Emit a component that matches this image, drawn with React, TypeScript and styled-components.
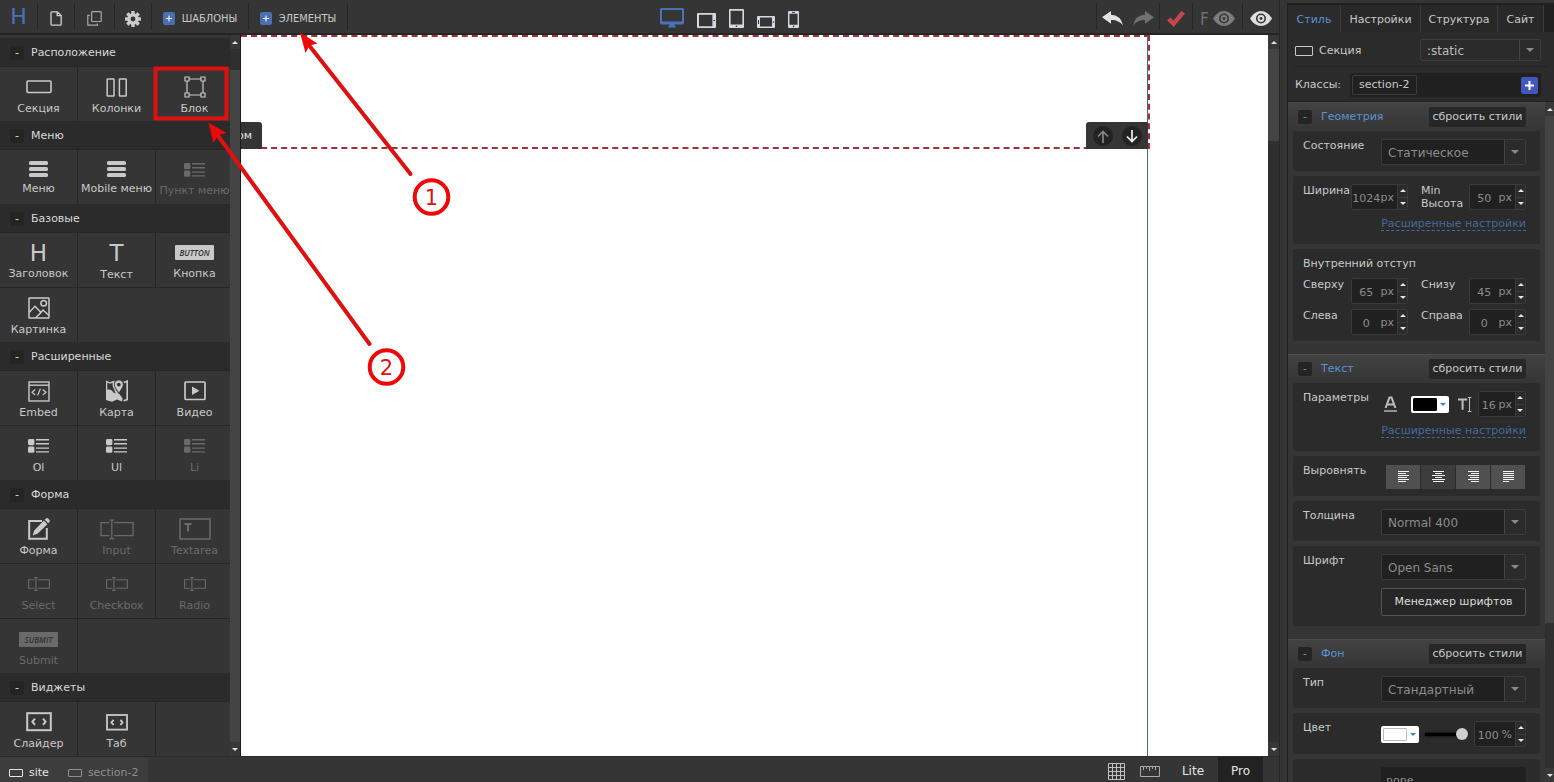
import React from "react";
import styled, { createGlobalStyle, css } from "styled-components";

const c = {
  bar: "#353535",
  dark: "#2b2b2b",
  deeper: "#222222",
  line: "#262626",
  text: "#c9c9c9",
  muted: "#6a6a6a",
  blue: "#5b93d6",
  link: "#446a9c",
  red: "#e01010",
};

const sans = `"DejaVu Sans", Verdana, sans-serif`;
const narrow = `"DejaVu Sans Condensed", "DejaVu Sans", sans-serif`;

const Global = createGlobalStyle`
  *, *::before, *::after { box-sizing: border-box; }
  body { margin: 0; background: ${c.bar}; overflow: hidden; }
  body, button, input, select, textarea { font-family: ${sans}; font-size: 11px; line-height: 14px; color: ${c.text}; }
  button { margin: 0; padding: 0; border: 0; background: none; cursor: pointer; }
  svg { display: block; flex: none; }
  h2 { margin: 0; font: inherit; }
`;

/* ---------- shell ---------- */

const Shell = styled.div`
  position: relative;
  display: flex;
  height: 100vh;
  background: ${c.bar};
`;

const Workspace = styled.main`
  flex: 1;
  min-width: 0;
  display: flex;
  flex-direction: column;
  border-right: 1px solid ${c.line};
`;

const Middle = styled.div`
  flex: 1;
  min-height: 0;
  display: flex;
`;

/* ---------- toolbar ---------- */

const Toolbar = styled.header`
  flex: none;
  height: 35px;
  display: flex;
  align-items: center;
  border-bottom: 2px solid #242424;
`;

const ToolGroup = styled.div`
  display: flex;
  align-items: center;
`;

const ToolButton = styled.button<{ $width: number; $divider?: boolean }>`
  width: ${(p) => p.$width}px;
  height: 27px;
  display: flex;
  align-items: center;
  justify-content: center;
  gap: 7px;
  padding-top: 4px;
  font-family: ${narrow};
  border-right: ${(p) => (p.$divider ? `1px solid ${c.line}` : "0")};
`;

const LogoButton = styled(ToolButton)`
  font-family: ${sans};
  font-size: 22px;
  line-height: 22px;
  padding-top: 0;
  color: #4a72b8;
`;

const Devices = styled.div`
  margin: 0 auto;
  padding: 2px 0 0 14px;
  display: flex;
  align-items: flex-end;
  gap: 13px;
`;

const DeviceButton = styled.button`
  display: flex;
`;

const RightTools = styled(ToolGroup)`
  border-left: 1px solid ${c.line};
  > button { gap: 4px; }
`;

const FixMark = styled.span`
  font-size: 17px;
  color: #6f6f6f;
`;

/* ---------- scroll bars ---------- */

const Bar = styled.div<{ $width: number }>`
  flex: none;
  width: ${(p) => p.$width}px;
  display: flex;
  flex-direction: column;
  background: #2f2f2f;
`;

const BarButton = styled.button`
  height: 14px;
  display: flex;
  align-items: center;
  justify-content: center;
  background: #383838;
`;

const BarGap = styled.div<{ $grow: number }>`
  flex: ${(p) => p.$grow} 0 0;
`;

const BarThumb = styled.div<{ $grow: number }>`
  flex: ${(p) => p.$grow} 0 0;
  background: #444444;
`;

const Tri: React.FC<{ up?: boolean; fill?: string; w?: number }> = ({ up, fill = "#e4e4e4", w = 6 }) => (
  <svg width={w} height={w / 2} viewBox="0 0 6 3">
    <path d={up ? "M0 3 3 0 6 3Z" : "M0 0H6L3 3Z"} fill={fill} />
  </svg>
);

const ScrollBar: React.FC<{ width: number; before: number; thumb: number; after: number }> = (p) => (
  <Bar $width={p.width}>
    <BarButton type="button" aria-label="Прокрутить вверх"><Tri up /></BarButton>
    <BarGap $grow={p.before} />
    <BarThumb $grow={p.thumb} />
    <BarGap $grow={p.after} />
    <BarButton type="button" aria-label="Прокрутить вниз"><Tri /></BarButton>
  </Bar>
);

/* ---------- element palette ---------- */

const Palette = styled.aside`
  flex: none;
  display: flex;
  border-right: 1px solid #1b1b1b;
`;

const PaletteList = styled.div`
  width: 230px;
  padding-top: 3px;
  overflow: hidden;
`;

const PaletteHead = styled.h2`
  height: 28px;
  display: flex;
  align-items: center;
  gap: 7px;
  padding: 1px 0 0 10px;
  background: ${c.dark};
  color: #dadada;
`;

const Fold = styled.button<{ $blue?: boolean }>`
  width: 14px;
  height: 14px;
  background: #242424;
  border-radius: 2px;
  color: ${(p) => (p.$blue ? c.blue : "#dadada")};
`;

const Tiles = styled.div`
  display: grid;
  grid-template-columns: repeat(3, 78px);
  grid-auto-rows: 55px;
`;

const Tile = styled.button<{ $muted?: boolean; $lift?: number }>`
  display: flex;
  flex-direction: column;
  align-items: center;
  padding-top: 6px;
  border-top: 1px solid ${c.line};
  border-right: 1px solid ${c.line};
  color: ${(p) => (p.$muted ? c.muted : c.text)};
  white-space: nowrap;
  > span:first-child {
    height: ${(p) => 28 - (p.$lift ?? 0)}px;
    margin-bottom: 1px;
    display: flex;
    align-items: center;
  }
`;

const Filler = styled.div`
  grid-column-end: -1;
  border-top: 1px solid ${c.line};
`;

const Letter = styled.b`
  font-size: 23px;
  font-weight: 400;
  line-height: 24px;
`;

const Stamp = styled.i`
  width: 39px;
  height: 15px;
  border-radius: 1px;
  background: currentColor;
  text-align: center;
  > b {
    display: block;
    font-family: "Open Sans", sans-serif;
    font-size: 8px;
    font-weight: 600;
    line-height: 15px;
    color: #333333;
  }
`;

const S = { fill: "none", stroke: "currentColor" } as const;

const icons: Record<string, React.ReactNode> = {
  section: <svg width="26" height="14" viewBox="0 0 26 14"><rect x="1" y="1" width="24" height="11.5" rx="1" {...S} strokeWidth="1.6" /></svg>,
  columns: <svg width="22" height="19" viewBox="0 0 22 19"><rect x="1.2" y="1" width="6.8" height="17" rx=".5" {...S} strokeWidth="1.5" /><rect x="13.4" y="1" width="6.8" height="17" rx=".5" {...S} strokeWidth="1.5" /></svg>,
  block: (
    <svg width="22" height="22" viewBox="0 0 22 22" {...S} strokeWidth="1.2">
      <path d="M5 3H17M5 19H17M3 5V17M19 5V17" />
      <path d="M1 1H5V5H1ZM17 1H21V5H17ZM1 17H5V21H1ZM17 17H21V21H17Z" />
    </svg>
  ),
  menu: <svg width="19" height="16" viewBox="0 0 19 16" fill="currentColor"><rect width="19" height="4" rx="1.6" /><rect y="6" width="19" height="4" rx="1.6" /><rect y="12" width="19" height="4" rx="1.6" /></svg>,
  list: (
    <svg width="22" height="16" viewBox="0 0 22 16" fill="currentColor">
      <rect x="0" y="1" width="6.4" height="6.2" rx="1.4" /><rect x="0" y="8.6" width="6.4" height="6.2" rx="1.4" />
      <path d="M8 1H21V2.4H8ZM8 5H21V6.4H8ZM8 9.4H21V10.8H8ZM8 13.2H21V14.6H8Z" />
    </svg>
  ),
  picture: (
    <svg width="22" height="22" viewBox="0 0 22 22" {...S} strokeWidth="1.5">
      <rect x="1" y="1" width="20" height="20" rx=".5" /><circle cx="15.7" cy="6.3" r="2.8" />
      <path d="M1 15.5 7 9.3 13 15.6 7.5 21M10.8 17.8 15 13 21 18.5" />
    </svg>
  ),
  embed: (
    <svg width="22" height="21" viewBox="0 0 22 21" {...S} strokeWidth="1.4">
      <rect x="1" y="1" width="20" height="19" /><path d="M1 4.2H21" />
      <path d="M7.2 8.5 4 11.3 7.2 14M14.8 8.5 18 11.3 14.8 14M12.4 7.8 9.6 14.6" strokeWidth="1.2" />
    </svg>
  ),
  map: (
    <svg width="22" height="22" viewBox="0 0 22 22">
      <path d="M0 .5 4 2.3 8.4.6V6Q9 9 11.6 12.6L13.4 14 16.6 18.6 16 21.6 11 19.4 6 21.8 0 20V11Z" fill="currentColor" />
      <path d="M1.3 2.4V9.6Q5.6 8.6 7.4 12.6L9.6 13.6 8.2 9.4 6.6 6V2.8L4 3.8Z" fill="#353535" />
      <path d="M17.8 2.6 21.2 1.2V19.6L17.6 20.8" {...S} strokeWidth="1.6" />
      <path d="M12.8 0A4.5 4.5 0 0 1 17.3 4.6C17.3 7.8 14 10.6 12.9 13.4 11.8 10.6 8.3 7.8 8.3 4.6A4.5 4.5 0 0 1 12.8 0Z" fill="currentColor" stroke="#353535" strokeWidth=".8" />
      <circle cx="12.8" cy="4.6" r="1.9" fill="#353535" />
    </svg>
  ),
  video: <svg width="22" height="20" viewBox="0 0 22 20"><rect x="1" y="1" width="20" height="17.5" rx="1" {...S} strokeWidth="1.7" /><path d="M8 5.6 15.4 9.8 8 14Z" fill="currentColor" /></svg>,
  form: (
    <svg width="22" height="22" viewBox="0 0 22 22">
      <path d="M14 3H1.2V20.8H18.8V10" {...S} strokeWidth="2" />
      <path d="M15.8 2.6 19.4 6.2 9.5 15.8 4.6 17.4 6.2 12.4ZM16.7 1.7 18 .5Q19.2-.4 20.4.8L21.3 1.8Q22.3 3 21.4 4.1L20.3 5.3Z" fill="currentColor" />
    </svg>
  ),
  input: (
    <svg width="34" height="21" viewBox="0 0 34 21" {...S} strokeWidth="1.3">
      <path d="M9.5 3.6H1V16.6H9.5M14 3.6H33V16.6H14M11.8 1.5V19M9.4.8Q11.8.8 11.8 2.2 11.8.8 14.2.8M9.4 19.8Q11.8 19.8 11.8 18.4 11.8 19.8 14.2 19.8" />
    </svg>
  ),
  textarea: <svg width="32" height="22" viewBox="0 0 32 22"><rect x="1" y="1" width="30" height="20" {...S} strokeWidth="1.5" /><path d="M5.500 6H12.500M9 6V13.500" {...S} strokeWidth="2.200" /></svg>,
  field: (
    <svg width="22" height="14" viewBox="0 0 22 14" {...S} strokeWidth="1.1">
      <path d="M6.2 2.8H.6V11.2H6.2M9.6 2.8H21.4V11.2H9.6M7.9 1V13M6.2.6H9.6M6.2 13.4H9.6" />
    </svg>
  ),
  slider: <svg width="26" height="20" viewBox="0 0 26 20" {...S}><rect x="1.2" y="1.2" width="23.6" height="17" strokeWidth="2" /><path d="M9 6.6 6.4 9.7 9 12.8M17 6.6 19.6 9.7 17 12.8" strokeWidth="2" /></svg>,
  tab: <svg width="22" height="18" viewBox="0 0 22 18" {...S}><rect x="1" y="2" width="20" height="14.6" strokeWidth="1.8" /><path d="M7.6 6.8 5.4 9.4 7.6 12M14.4 6.8 16.6 9.4 14.4 12" strokeWidth="1.8" /></svg>,
  heading: <Letter>H</Letter>,
  text: <Letter>T</Letter>,
  button: <Stamp><b>BUTTON</b></Stamp>,
  submit: <Stamp><b>SUBMIT</b></Stamp>,
};

type Item = [icon: string, label: string, muted?: boolean, lift?: number];

const palette: { title: string; items: Item[] }[] = [
  { title: "Расположение", items: [["section", "Секция"], ["columns", "Колонки"], ["block", "Блок"]] },
  { title: "Меню", items: [["menu", "Меню", false, 3], ["menu", "Mobile меню", false, 3], ["list", "Пункт меню", true, 1]] },
  { title: "Базовые", items: [["heading", "Заголовок", false, 1], ["text", "Текст"], ["button", "Кнопка", false, 1], ["picture", "Картинка"]] },
  {
    title: "Расширенные",
    items: [["embed", "Embed"], ["map", "Карта"], ["video", "Видео"], ["list", "Ol"], ["list", "Ul"], ["list", "Li", true]],
  },
  {
    title: "Форма",
    items: [
      ["form", "Форма"], ["input", "Input", true], ["textarea", "Textarea", true],
      ["field", "Select", true], ["field", "Checkbox", true], ["field", "Radio", true],
      ["submit", "Submit", true],
    ],
  },
  { title: "Виджеты", items: [["slider", "Слайдер"], ["tab", "Таб"]] },
];

/* ---------- canvas ---------- */

const Canvas = styled.div`
  flex: 1;
  min-width: 0;
  display: flex;
  background: #ffffff;
`;

const Page = styled.div`
  flex: 1;
  margin-right: 120px;
  border-right: 1px solid #4f6a80;
`;

const Section = styled.section`
  position: relative;
  height: 114px;
  margin-right: -3px;
  border: 2px dashed #a0303a;
  border-left: 0;
`;

const Tag = styled.div<{ $side: "left" | "right" }>`
  position: absolute;
  bottom: -2px;
  height: 27px;
  display: flex;
  align-items: center;
  overflow: hidden;
  background: ${c.bar};
  color: #e6e6e6;
  ${(p) =>
    p.$side === "left"
      ? css`left: 0; width: 21px; justify-content: flex-end; padding-right: 10px; border-radius: 0 3px 0 0;`
      : css`right: 0; width: 62px; justify-content: center; gap: 9px; padding-top: 1px; border-radius: 3px 0 0 0;`}
`;

const MoveButton = styled.button<{ $dim?: boolean }>`
  width: 20px;
  height: 20px;
  border-radius: 50%;
  background: #232323;
  display: flex;
  align-items: center;
  justify-content: center;
  color: ${(p) => (p.$dim ? "#858585" : "#f0f0f0")};
`;

const Annotations = styled.svg`
  position: absolute;
  left: 0;
  top: 0;
  pointer-events: none;
`;

/* ---------- status bar ---------- */

const Status = styled.footer`
  flex: none;
  height: 26px;
  display: flex;
  align-items: stretch;
  border-top: 1px solid #2a2a2a;
  > nav { display: flex; margin-right: auto; }
`;

const Crumb = styled.button<{ $on?: boolean }>`
  display: flex;
  align-items: center;
  gap: 6px;
  padding: 6px 10px 0 9px;
  background: #3d3d3d;
  color: ${(p) => (p.$on ? "#e6e6e6" : "#8f8f8f")};
`;

const StatusButton = styled.button<{ $width: number; $on?: boolean }>`
  width: ${(p) => p.$width}px;
  display: flex;
  align-items: center;
  justify-content: center;
  padding-top: 3px;
  font-size: 12px;
  color: #e6e6e6;
  background: ${(p) => (p.$on ? "#222222" : "none")};
`;

/* ---------- inspector ---------- */

const Inspector = styled.aside`
  flex: none;
  width: 267px;
  margin: 3px 0 0 7px;
  display: flex;
  flex-direction: column;
  background: ${c.dark};
  border: 2px solid #202020;
  border-width: 2px 0 0 1px;
`;

const Tabs = styled.nav`
  flex: none;
  height: 27px;
  display: flex;
  background: #202020;
`;

const TabButton = styled.button<{ $width: number; $on?: boolean }>`
  width: ${(p) => p.$width}px;
  padding-top: 3px;
  background: ${(p) => (p.$on ? c.dark : "#282828")};
  border-right: 1px solid #3a3a3a;
  color: ${(p) => (p.$on ? c.blue : c.text)};
`;

const HeadRow = styled.div<{ $rule?: boolean }>`
  flex: none;
  height: ${(p) => (p.$rule ? 35 : 34)}px;
  margin: 0 6px;
  display: flex;
  align-items: center;
  justify-content: space-between;
  padding: 2px 7px 0 1px;
  border-bottom: ${(p) => (p.$rule ? "1px solid #232323" : "0")};
`;

const Kind = styled.label`
  display: flex;
  align-items: center;
  gap: 6px;
  padding-top: 1px;
`;

const ClassBox = styled.div`
  width: 191px;
  height: 24px;
  display: flex;
  align-items: center;
  justify-content: space-between;
  padding: 0 3px 0 2px;
  background: #202020;
  border-radius: 2px;
`;

const Chip = styled.button`
  height: 20px;
  padding: 0 6px;
  border: 1px solid #3c3c3c;
  border-radius: 2px;
`;

const AddButton = styled.button`
  width: 17px;
  height: 17px;
  display: flex;
  align-items: center;
  justify-content: center;
  border-radius: 2px;
  background: #4256bd;
`;

const Scroller = styled.div`
  flex: 1;
  min-height: 0;
  display: flex;
  border-top: 1px solid #1e1e1e;
  background: ${c.bar};
`;

const Groups = styled.div`
  flex: 1;
  display: flex;
  flex-direction: column;
  gap: 13px;
  overflow: hidden;
`;

const GroupBox = styled.section`
  display: flex;
  flex-direction: column;
  gap: 5px;
  padding: 0 5px;
`;

const GroupHead = styled.h2`
  height: 29px;
  margin: 0 -5px -5px;
  display: flex;
  align-items: center;
  gap: 9px;
  padding: 0 19px 0 10px;
  border-top: 1px solid #4c4c4c;
  background: linear-gradient(#424242, ${c.bar});
  color: ${c.blue};
  > span { flex: 1; }
`;

const Reset = styled.button`
  width: 97px;
  height: 20px;
  background: #272727;
  border-radius: 2px;
`;

const Card = styled.div<{ $height: number }>`
  height: ${(p) => p.$height}px;
  flex: none;
  padding: 8px 14px 0 10px;
  background: ${c.dark};
  border-radius: 3px;
`;

const CardRow = styled.div`
  display: flex;
  justify-content: space-between;
  align-items: flex-start;
`;

const Right = styled.div`
  width: 145px;
  display: flex;
  flex-wrap: wrap;
  align-items: center;
  justify-content: space-between;
  row-gap: 8px;
`;

const Pair = styled.div`
  display: grid;
  grid-template-columns: 48px 70px 48px 57px;
  row-gap: 5px;
  align-items: start;
  line-height: 13px;
  label { line-height: 13px; }
`;

const Note = styled.div`
  margin-bottom: 7px;
`;

const SelectBox = styled.div<{ $width: number; $height: number; $plain?: boolean }>`
  width: ${(p) => p.$width}px;
  height: ${(p) => p.$height}px;
  display: flex;
  border: 1px solid #3c3c3c;
  border-radius: 2px;
  background: ${(p) => (p.$plain ? "#2b2b2b" : "#202020")};
  > select {
    flex: 1;
    min-width: 0;
    appearance: none;
    border: 0;
    border-right: 1px solid #444444;
    background: none;
    padding: 2px 0 0 6px;
    font-size: 12px;
    color: ${(p) => (p.$plain ? "#bcbcbc" : "#8c8c8c")};
    line-height: 16px;
  }
  > span {
    width: 20px;
    display: flex;
    align-items: center;
    justify-content: center;
    background: ${c.dark};
  }
`;

const NumberBox = styled.div<{ $width: number }>`
  width: ${(p) => p.$width}px;
  height: 26px;
  display: flex;
  background: #202020;
  border: 1px solid #3a3a3a;
  border-radius: 2px;
  color: #8c8c8c;
  > input {
    flex: 1;
    min-width: 0;
    width: 0;
    padding: 3px 0 0;
    border: 0;
    background: none;
    text-align: center;
    color: inherit;
  }
  > span { padding: 6px 3px 0 0; line-height: 14px; }
`;

const Spin = styled.div`
  width: 10px;
  display: flex;
  flex-direction: column;
  background: ${c.dark};
  border-left: 1px solid #3a3a3a;
  > button {
    flex: 1;
    display: flex;
    align-items: center;
    justify-content: center;
  }
  > button + button { border-top: 1px solid #3a3a3a; }
`;

const More = styled.a`
  display: block;
  width: fit-content;
  margin: 7px 0 0 auto;
  border-bottom: 1px dashed ${c.link};
  line-height: 13px;
  text-decoration: none;
  color: ${c.link};
  white-space: nowrap;
`;

const Swatch = styled.button<{ $color: string; $edge: string }>`
  width: 38px;
  height: 17px;
  display: flex;
  align-items: center;
  justify-content: space-between;
  padding: 0 3px 0 2px;
  background: #ffffff;
  border-radius: 2px;
  &::before {
    content: "";
    width: 24px;
    height: 13px;
    background: ${(p) => p.$color};
    border: 1px solid ${(p) => p.$edge};
    border-radius: 1px;
  }
`;

const AlignGroup = styled.div`
  display: flex;
  gap: 1px;
  margin: 1px 1px 0 0;
  width: 139px;
  > button {
    flex: 1;
    height: 24px;
    display: flex;
    align-items: center;
    justify-content: center;
    background: #505050;
    color: #f4f4f4;
  }
  > button[aria-pressed="true"] { background: #3c3c3c; }
`;

const FontsButton = styled.button`
  width: 145px;
  height: 28px;
  border: 1px solid #545454;
  border-radius: 2px;
  background: #262626;
  color: #dcdcdc;
`;

const Opacity = styled.input`
  appearance: none;
  width: 43px;
  height: 14px;
  margin: 0;
  background: none;
  &::-webkit-slider-runnable-track { height: 3px; background: #000000; box-shadow: 0 0 3px #000000; }
  &::-webkit-slider-thumb {
    appearance: none;
    width: 12px;
    height: 12px;
    margin-top: -5px;
    border-radius: 50%;
    background: #cfcfcf;
  }
`;

const ImageInput = styled.input`
  width: 145px;
  height: 26px;
  padding: 1px 5px 0;
  border: 0;
  border-radius: 2px;
  background: #202020;
  color: #8c8c8c;
`;

const Pick: React.FC<{ id: string; value: string; width?: number; height?: number; plain?: boolean }> = ({
  id, value, width = 145, height = 26, plain,
}) => (
  <SelectBox $width={width} $height={height} $plain={plain}>
    <select id={id} defaultValue={value}><option>{value}</option></select>
    <span><Tri fill="#8a8a8a" w={8} /></span>
  </SelectBox>
);

const Num: React.FC<{ id: string; value: string; unit?: string; width?: number }> = ({ id, value, unit = "px", width = 57 }) => (
  <NumberBox $width={width}>
    <input id={id} defaultValue={value} />
    <span>{unit}</span>
    <Spin>
      <button type="button" aria-label="Больше"><Tri up /></button>
      <button type="button" aria-label="Меньше"><Tri /></button>
    </Spin>
  </NumberBox>
);

const Group: React.FC<{ title: string; children: React.ReactNode }> = ({ title, children }) => (
  <GroupBox>
    <GroupHead>
      <Fold $blue type="button" aria-label={`Свернуть: ${title}`}>-</Fold>
      <span>{title}</span>
      <Reset type="button">сбросить стили</Reset>
    </GroupHead>
    {children}
  </GroupBox>
);

const alignWidths = {
  left: [11, 8, 11, 9, 11, 8],
  center: [11, 7, 13, 7, 13, 11],
  right: [11, 8, 11, 9, 11, 8],
  justify: [11, 11, 11, 11, 11, 6],
};

const AlignIcon: React.FC<{ kind: keyof typeof alignWidths }> = ({ kind }) => (
  <svg width="13" height="12" viewBox="0 0 13 12" fill="currentColor">
    {alignWidths[kind].map((w, i) => (
      <rect key={i} x={kind === "right" ? 12 - w : kind === "center" ? (13 - w) / 2 : 1} y={i * 2} width={w} height="1" />
    ))}
  </svg>
);

const MiniSection: React.FC<{ w: number; h: number }> = ({ w, h }) => (
  <svg width={w} height={h}><rect x=".5" y=".5" width={w - 1} height={h - 1} rx=".5" {...S} /></svg>
);

const Plus: React.FC = () => (
  <svg width="12" height="13" viewBox="0 0 12 13"><rect width="12" height="13" rx="2" fill="#4a6fb3" /><path d="M6 3.5V9.5M3 6.5H9" stroke="#e8eefa" strokeWidth="1.2" /></svg>
);

const Eye: React.FC<{ color: string }> = ({ color }) => (
  <svg width="22" height="15" viewBox="0 0 22 15">
    <path d="M0 7.5Q4.5 0 11 0T22 7.5Q17.5 15 11 15T0 7.5Z" fill={color} />
    <circle cx="11" cy="7.5" r="5" fill={c.bar} /><circle cx="11" cy="7.5" r="3.4" fill={color} /><circle cx="11" cy="7.5" r="1.4" fill={c.bar} />
  </svg>
);

const Undo: React.FC<{ color: string; flip?: boolean }> = ({ color, flip }) => (
  <svg width="21" height="15" viewBox="0 0 21 15">
    <path transform={flip ? "matrix(-1 0 0 1 21 0)" : undefined} d="M0 6.2 9 0V3.8Q18.5 4 21 14.5 16.5 8.6 9 9V12.8Z" fill={color} />
  </svg>
);

const device = "#d3d8e4";

const TopBar: React.FC = () => (
  <Toolbar>
    <ToolGroup>
      <LogoButton type="button" $width={38} $divider>H</LogoButton>
      <ToolButton type="button" $width={37} $divider aria-label="Новая страница">
        <svg width="12" height="15" viewBox="0 0 12 15" fill="none" stroke="#d0d0d0" strokeWidth="1.3"><path d="M1 2Q1 .8 2 .8H7.3L11.2 4.6V13Q11.2 14.2 10.2 14.2H2Q1 14.2 1 13ZM7.2.8V4.7H11.2" /></svg>
      </ToolButton>
      <ToolButton type="button" $width={40} $divider aria-label="Копировать">
        <svg width="15" height="15" viewBox="0 0 15 15" fill="none" stroke="#a8a8a8" strokeWidth="1.2"><rect x="4.6" y=".7" width="9.6" height="9.8" rx=".5" /><path d="M2.8 4.4H.8V14.2H10.4V12.4" /></svg>
      </ToolButton>
      <ToolButton type="button" $width={37} $divider aria-label="Параметры">
        <svg width="16" height="16" viewBox="-8 -8 16 16">
          <g fill="#cccccc">
            {[0, 45, 90, 135].map((a) => <rect key={a} x="-1.7" y="-8" width="3.4" height="16" rx=".5" transform={`rotate(${a})`} />)}
            <circle r="5.7" />
          </g>
          <circle r="2.4" fill={c.bar} />
        </svg>
      </ToolButton>
      <ToolButton type="button" $width={97} $divider><Plus />ШАБЛОНЫ</ToolButton>
      <ToolButton type="button" $width={99} $divider><Plus />ЭЛЕМЕНТЫ</ToolButton>
    </ToolGroup>
    <Devices>
      <DeviceButton type="button" aria-label="Монитор">
        <svg width="24" height="20" viewBox="0 0 24 20"><path d="M1.5 0H22.5Q24 0 24 1.5V15Q24 16.5 22.5 16.5H1.5Q0 16.5 0 15V1.5Q0 0 1.5 0ZM2 2V13.5H22V2ZM9.5 16.5H14.5L16 19.5H8Z" fill="#4a72b8" fillRule="evenodd" /></svg>
      </DeviceButton>
      <DeviceButton type="button" aria-label="Планшет горизонтально">
        <svg width="19" height="15" viewBox="0 0 19 15"><path d="M1 0H18Q19 0 19 1V14Q19 15 18 15H1Q0 15 0 14V1Q0 0 1 0ZM2 1.8V13.2H15.4V1.8Z" fill={device} fillRule="evenodd" /><circle cx="17.2" cy="7.5" r=".8" fill="#333" /></svg>
      </DeviceButton>
      <DeviceButton type="button" aria-label="Планшет">
        <svg width="15" height="19" viewBox="0 0 15 19"><path d="M1 0H14Q15 0 15 1V18Q15 19 14 19H1Q0 19 0 18V1Q0 0 1 0ZM1.6 1.8V15.6H13.4V1.8Z" fill={device} fillRule="evenodd" /><circle cx="7.5" cy="17.2" r=".8" fill="#333" /></svg>
      </DeviceButton>
      <DeviceButton type="button" aria-label="Телефон горизонтально">
        <svg width="18" height="12" viewBox="0 0 18 12"><path d="M1 0H17Q18 0 18 1V11Q18 12 17 12H1Q0 12 0 11V1Q0 0 1 0ZM3 1.4V10.6H15V1.4Z" fill={device} fillRule="evenodd" /><circle cx="16.5" cy="6" r=".8" fill="#333" /><path d="M1.5 4V8" stroke="#333" /></svg>
      </DeviceButton>
      <DeviceButton type="button" aria-label="Телефон">
        <svg width="11" height="17" viewBox="0 0 11 17"><path d="M1 0H10Q11 0 11 1V16Q11 17 10 17H1Q0 17 0 16V1Q0 0 1 0ZM1.4 2.8V13.8H9.6V2.8Z" fill={device} fillRule="evenodd" /><circle cx="5.5" cy="15.4" r=".8" fill="#333" /><path d="M4 1.4H7" stroke="#333" /></svg>
      </DeviceButton>
    </Devices>
    <RightTools>
      <ToolButton type="button" $width={31} aria-label="Отменить"><Undo color="#e2e2e2" /></ToolButton>
      <ToolButton type="button" $width={32} $divider aria-label="Повторить"><Undo color="#707070" flip /></ToolButton>
      <ToolButton type="button" $width={33} $divider aria-label="Сохранить">
        <svg width="18" height="16" viewBox="0 0 18 16"><path d="M0 9.2 3.6 6.6 6.4 9.8 14.4 0 18 2.4 6.8 16Z" fill="#c9454d" /></svg>
      </ToolButton>
      <ToolButton type="button" $width={50} $divider aria-label="Фиксированный просмотр"><FixMark>F</FixMark><Eye color="#7c7c7c" /></ToolButton>
      <ToolButton type="button" $width={36} aria-label="Просмотр"><Eye color="#dedede" /></ToolButton>
    </RightTools>
  </Toolbar>
);

const ElementPalette: React.FC = () => (
  <Palette>
    <PaletteList>
      {palette.map((g) => (
        <section key={g.title}>
          <PaletteHead><Fold type="button" aria-label={`Свернуть: ${g.title}`}>-</Fold>{g.title}</PaletteHead>
          <Tiles>
            {g.items.map(([icon, label, muted, lift]) => (
              <Tile key={label} type="button" $muted={muted} $lift={lift}><span>{icons[icon]}</span><span>{label}</span></Tile>
            ))}
            {g.items.length % 3 > 0 && <Filler style={{ gridColumnStart: (g.items.length % 3) + 1 }} />}
          </Tiles>
        </section>
      ))}
    </PaletteList>
    <ScrollBar width={10} before={21} thumb={673} after={0} />
  </Palette>
);

const StyleInspector: React.FC = () => (
  <Inspector>
    <Tabs>
      <TabButton type="button" $width={53} $on>Стиль</TabButton>
      <TabButton type="button" $width={80}>Настройки</TabButton>
      <TabButton type="button" $width={77}>Структура</TabButton>
      <TabButton type="button" $width={46}>Сайт</TabButton>
    </Tabs>
    <HeadRow $rule>
      <Kind htmlFor="state"><MiniSection w={18} h={10} />Секция</Kind>
      <Pick id="state" value=":static" width={121} height={22} plain />
    </HeadRow>
    <HeadRow>
      <span>Классы:</span>
      <ClassBox>
        <Chip type="button">section-2</Chip>
        <AddButton type="button" aria-label="Добавить класс"><svg width="9" height="9"><path d="M4.5 0V9M0 4.5H9" stroke="#fff" strokeWidth="2" /></svg></AddButton>
      </ClassBox>
    </HeadRow>
    <Scroller>
      <Groups>
        <Group title="Геометрия">
          <Card $height={40}>
            <CardRow><label htmlFor="position">Состояние</label><Pick id="position" value="Статическое" /></CardRow>
          </Card>
          <Card $height={68}>
            <Pair>
              <label htmlFor="w">Ширина</label><Num id="w" value="1024" />
              <label htmlFor="h">Min Высота</label><Num id="h" value="50" />
            </Pair>
            <More href="#geometry">Расширенные настройки</More>
          </Card>
          <Card $height={92}>
            <Note>Внутренний отступ</Note>
            <Pair>
              <label htmlFor="pt">Сверху</label><Num id="pt" value="65" />
              <label htmlFor="pb">Снизу</label><Num id="pb" value="45" />
              <label htmlFor="pl">Слева</label><Num id="pl" value="0" />
              <label htmlFor="pr">Справа</label><Num id="pr" value="0" />
            </Pair>
          </Card>
        </Group>
        <Group title="Текст">
          <Card $height={68}>
            <CardRow>
              <label htmlFor="size">Параметры</label>
              <Right>
                <svg width="24" height="16" viewBox="0 0 24 16"><path d="M4.6 12 8.4 1.6H10.6L14.400 12M6.3 8.4H12.7" {...S} stroke="#bdbdbd" strokeWidth="2" /><path d="M3 15H16" stroke="#bdbdbd" strokeWidth="1.4" /></svg>
                <Swatch type="button" $color="#000000" $edge="#000000" aria-label="Цвет текста"><Tri fill="#3f86c9" /></Swatch>
                <svg width="18" height="15" viewBox="-4 0 18 15" {...S} stroke="#bdbdbd"><path d="M0 2.6H9.2M4.6 2.6V12.8" strokeWidth="2" /><path d="M11.500 1V14M9.800.5H13.400M9.800 14.500H13.400" strokeWidth="1" /></svg>
                <Num id="size" value="16" width={48} />
              </Right>
            </CardRow>
            <More href="#text">Расширенные настройки</More>
          </Card>
          <Card $height={40}>
            <CardRow>
              <span>Выровнять</span>
              <AlignGroup>
                <button type="button" aria-label="По левому краю"><AlignIcon kind="left" /></button>
                <button type="button" aria-label="По центру" aria-pressed="true"><AlignIcon kind="center" /></button>
                <button type="button" aria-label="По правому краю"><AlignIcon kind="right" /></button>
                <button type="button" aria-label="По ширине"><AlignIcon kind="justify" /></button>
              </AlignGroup>
            </CardRow>
          </Card>
          <Card $height={40}>
            <CardRow><label htmlFor="weight">Толщина</label><Pick id="weight" value="Normal 400" /></CardRow>
          </Card>
          <Card $height={80}>
            <CardRow>
              <label htmlFor="font">Шрифт</label>
              <Right><Pick id="font" value="Open Sans" /><FontsButton type="button">Менеджер шрифтов</FontsButton></Right>
            </CardRow>
          </Card>
        </Group>
        <Group title="Фон">
          <Card $height={40}>
            <CardRow><label htmlFor="bg">Тип</label><Pick id="bg" value="Стандартный" /></CardRow>
          </Card>
          <Card $height={41}>
            <CardRow>
              <label htmlFor="alpha">Цвет</label>
              <Right>
                <Swatch type="button" $color="#ffffff" $edge="#bbbbbb" aria-label="Цвет фона"><Tri fill="#3f86c9" /></Swatch>
                <Opacity type="range" aria-label="Прозрачность" defaultValue={100} />
                <Num id="alpha" value="100" unit="%" width={52} />
              </Right>
            </CardRow>
          </Card>
          <Card $height={68}>
            <CardRow><span /><ImageInput aria-label="Изображение" defaultValue="none" /></CardRow>
          </Card>
        </Group>
      </Groups>
      <ScrollBar width={9} before={0} thumb={509} after={145} />
    </Scroller>
  </Inspector>
);

export default function App() {
  return (
    <>
      <Global />
      <Shell>
        <Workspace>
          <TopBar />
          <Middle>
            <ElementPalette />
            <Canvas>
              <Page>
                <Section>
                  <Tag $side="left">ом</Tag>
                  <Tag $side="right">
                    <MoveButton type="button" $dim aria-label="Выше"><svg width="12" height="13" viewBox="0 0 12 13" {...S} strokeWidth="1.7"><path d="M6 13V1.5M1 6.5 6 1.4 11 6.5" /></svg></MoveButton>
                    <MoveButton type="button" aria-label="Ниже"><svg width="12" height="13" viewBox="0 0 12 13" {...S} strokeWidth="1.7"><path d="M6 0V11.5M1 6.5 6 11.6 11 6.5" /></svg></MoveButton>
                  </Tag>
                </Section>
              </Page>
            </Canvas>
            <ScrollBar width={11} before={0} thumb={92} after={600} />
          </Middle>
          <Status>
            <nav>
              <Crumb type="button" $on><MiniSection w={14} h={8} />site</Crumb>
              <Crumb type="button"><MiniSection w={14} h={8} />section-2</Crumb>
            </nav>
            <StatusButton type="button" $width={32} aria-label="Сетка">
              <svg width="17" height="17" viewBox="0 0 17 17" {...S} stroke="#c4c0c0"><path d="M.5.5H16.5V16.5H.5ZM4.5 0V17M8.5 0V17M12.5 0V17M0 4.5H17M0 8.5H17M0 12.5H17" /></svg>
            </StatusButton>
            <StatusButton type="button" $width={36} aria-label="Линейка">
              <svg width="20" height="11" viewBox="0 0 20 11" {...S} stroke="#aaaaaa"><path d="M.5.5H19.5V10.5H.5ZM3.5 1V4M6.5 1V3M9.5 1V5M12.5 1V3M15.5 1V4" /></svg>
            </StatusButton>
            <StatusButton type="button" $width={50}>Lite</StatusButton>
            <StatusButton type="button" $width={45} $on>Pro</StatusButton>
            <StatusButton as="span" $width={16} />
          </Status>
        </Workspace>
        <StyleInspector />
        <Annotations width="480" height="400" viewBox="0 0 480 400">
          <rect x="155.5" y="68.5" width="71" height="50" fill="none" stroke={c.red} strokeWidth="4" />
          <g stroke={c.red} strokeWidth="4" strokeLinecap="round">
            <path d="M410.500 174 308 44" />
            <path d="M369.500 344 216 133" />
          </g>
          <g fill="#f00808">
            <path d="M300 32.500 317.500 43.500 309.500 45.500 305.500 53Z" />
            <path d="M208.500 122.500 226.500 133 218 135 213.500 143Z" />
          </g>
          <g fill="#ffffff" stroke="#f00808" strokeWidth="4"><circle cx="431.5" cy="197" r="16.8" /><circle cx="386.5" cy="367" r="16.8" /></g>
          <g fill={c.red} fontFamily="DejaVu Sans" fontSize="21" textAnchor="middle"><text x="431.500" y="205">1</text><text x="386.500" y="375">2</text></g>
        </Annotations>
      </Shell>
    </>
  );
}
